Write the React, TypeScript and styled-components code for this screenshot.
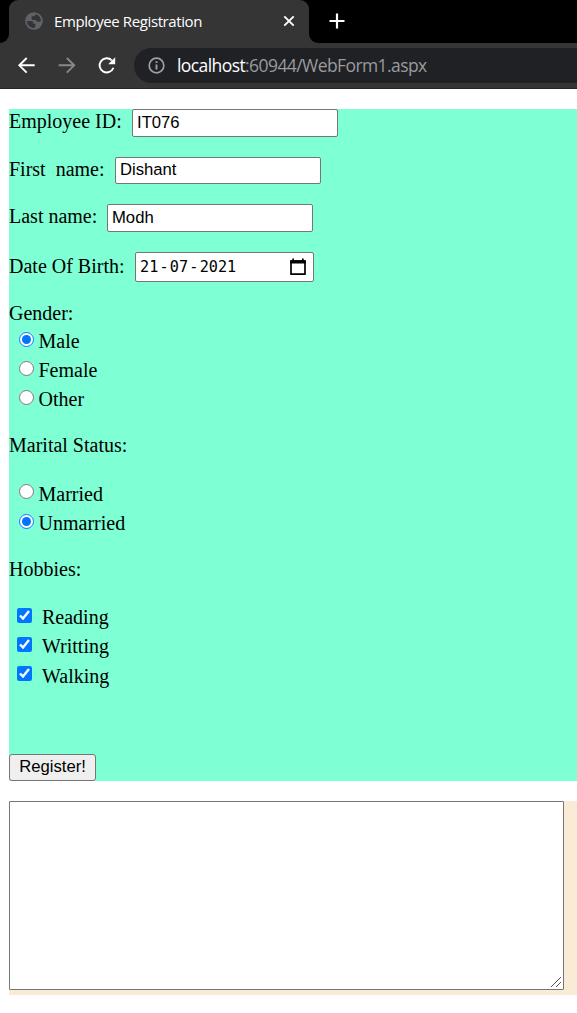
import React from 'react';
import styled, { createGlobalStyle } from 'styled-components';

const GlobalStyle = createGlobalStyle`
  * { box-sizing: border-box; }
  html, body { margin: 0; background: #fff; overflow: hidden; }
`;

const Page = styled.div`
  width: 577px;
  height: 1013px;
  overflow: hidden;
  background: #fff;
  color: #000;
  font: 20px/22px 'Liberation Serif', 'Times New Roman', serif;
`;

const Browser = styled.header`
  height: 89px;
  background: #353535;
  border-bottom: 1px solid #242527;
  font-family: 'Open Sans', 'Segoe UI', sans-serif;
`;

const TabStrip = styled.div`
  height: 43px;
  display: flex;
  background: #353535;
`;

const StripStart = styled.div`
  width: 9px;
  background: #000;
  border-bottom-right-radius: 9px;
`;

const TabBack = styled.div`
  width: 300px;
  background: #000;
`;

const Tab = styled.div`
  height: 43px;
  padding: 0 13px 1px 16px;
  display: flex;
  align-items: center;
  background: #353535;
  border-radius: 9px 9px 0 0;
`;

const TabTitle = styled.span`
  flex: 1;
  margin-left: 11px;
  color: #fff;
  font-size: 15px;
  line-height: 20px;
  letter-spacing: -0.4px;
  white-space: nowrap;
`;

const StripRest = styled.div`
  flex: 1;
  padding: 13px 0 0 19.5px;
  background: #000;
  border-bottom-left-radius: 9px;
`;

const Toolbar = styled.div`
  height: 45px;
  padding-left: 17px;
  display: flex;
  align-items: center;
`;

const NavIcon = styled.svg`
  flex: none;
  display: block;
  margin-right: 20px;
`;

const AddressBar = styled.div`
  flex: 1;
  height: 35px;
  margin: 0 0 1px -3px;
  padding-left: 14px;
  display: flex;
  align-items: center;
  background: #202124;
  border-radius: 18px 0 0 18px;
`;

const Url = styled.span`
  margin-left: 12px;
  color: #999b9e;
  font-size: 17.5px;
  line-height: 24px;
  letter-spacing: -0.58px;
  white-space: nowrap;
`;

const Host = styled.span`
  color: #fff;
`;

const Form = styled.form`
  height: 672px;
  margin: 20px 0 0 9px;
  background: #7fffd4;
`;

const Row = styled.div<{ $height: number }>`
  height: ${p => p.$height}px;
  display: flex;
  align-items: flex-start;
  white-space: pre;
`;

const Label = styled.label<{ $width: number; $drop?: number }>`
  flex: none;
  width: ${p => p.$width}px;
  margin-top: ${p => p.$drop ?? 1}px;
`;

const TextInput = styled.input<{ $short?: boolean }>`
  width: 206px;
  height: ${p => (p.$short ? 27 : 28)}px;
  padding: 0 4px ${p => (p.$short ? 1 : 0)}px;
  border: 1px solid #767676;
  border-radius: 2px;
  background: #fff;
  color: #000;
  font: 16.67px 'Liberation Sans', Arial, sans-serif;
  outline: none;
`;

const DateField = styled.div`
  width: 179px;
  height: 30px;
  padding: 0 6px 0 4px;
  display: flex;
  align-items: center;
  justify-content: space-between;
  border: 1px solid #767676;
  border-radius: 2px;
  background: #fff;
  font: 15.2px/20px 'DejaVu Sans Mono', Consolas, monospace;
`;

const Dash = styled.span`
  margin: 0 1.2px;
`;

const Choice = styled.input<{ $left: number; $gap: number; $top: number }>`
  flex: none;
  width: 15px;
  height: 15px;
  margin: ${p => p.$top}px ${p => p.$gap}px 0 ${p => p.$left}px;
`;

const RegisterButton = styled.button`
  display: block;
  width: 87px;
  height: 27px;
  padding: 0 0 2px;
  border: 1px solid #767676;
  border-radius: 3px;
  background: #efefef;
  color: #000;
  font: 16.67px 'Liberation Sans', Arial, sans-serif;
`;

const Output = styled.section`
  position: relative;
  height: 194px;
  margin: 20px 0 0 9px;
  background: #faebd7;
`;

const OutputBox = styled.textarea`
  display: block;
  width: 555px;
  height: 189px;
  border: 1px solid #767676;
  border-radius: 1px;
  background: #fff;
  outline: none;
  resize: none;
`;

const ResizeGrip = styled.svg`
  position: absolute;
  left: 541px;
  top: 175px;
  pointer-events: none;
`;

type OptionProps = {
  type: 'radio' | 'checkbox';
  name: string;
  text: string;
  height: number;
  top?: number;
  checked?: boolean;
};

function Option({ type, name, text, height, top = 2, checked }: OptionProps) {
  const radio = type === 'radio';
  return (
    <Row as="label" $height={height}>
      <Choice type={type} name={name} defaultChecked={checked} $top={top} $left={radio ? 10 : 8} $gap={radio ? 4.5 : 10} />
      {text}
    </Row>
  );
}

export default function App() {
  return (
    <>
      <GlobalStyle />
      <Page>
        <Browser>
          <TabStrip>
            <StripStart />
            <TabBack>
              <Tab>
                <svg width="18" height="18" viewBox="0 0 18 18">
                  <circle cx="9" cy="9" r="8.8" fill="#5f6368" />
                  <path d="M2 9.1h4.2c1.5 0 2.2.8 2.2 2v.6h2v2.2c-.1 1.2-.8 2-2 2.1C4.7 15.7 2 12.9 2 9.1ZM11 2.3c2.6.8 4.7 3 5 6-.6 1.2-1.700 1.700-3 1.500-1.200-.1-1.800-.8-1.900-1.800H8.300c-1.300-.1-1.900-.8-1.900-2s.8-1.900 2-1.900h1.200c.2-.9.6-1.500 1.400-1.800Z" fill="#353535" />
                </svg>
                <TabTitle>Employee Registration</TabTitle>
                <svg width="14" height="14" viewBox="0 0 14 14" fill="none" stroke="#fff" strokeWidth="1.9">
                  <path d="M2.3 2.3 11.7 11.7M11.7 2.3 2.3 11.7" />
                </svg>
              </Tab>
            </TabBack>
            <StripRest>
              <svg width="16" height="16" viewBox="0 0 16 16" stroke="#fff" strokeWidth="2.2" display="block">
                <path d="M.5 8h15M8 .5v15" />
              </svg>
            </StripRest>
          </TabStrip>
          <Toolbar>
            <NavIcon width="20" height="20" viewBox="0 0 20 20" fill="none" stroke="#fff" strokeWidth="1.9">
              <path d="M17.7 9.3H2.5M9.7 2 2.3 9.3 9.7 16.7" />
            </NavIcon>
            <NavIcon width="20" height="20" viewBox="0 0 20 20" fill="none" stroke="#87888a" strokeWidth="1.9">
              <path d="M1.7 9.3h15.5M9.8 2 17.2 9.3 9.8 16.7" />
            </NavIcon>
            <NavIcon width="20" height="20" viewBox="0 0 20 20" fill="none" stroke="#fff" strokeWidth="1.9">
              <path d="M16.4 11.7A7.1 7.1 0 1 1 14.8 4.4" />
              <path d="M18.2 1.3v7h-7Z" fill="#fff" stroke="none" />
            </NavIcon>
            <AddressBar>
              <svg width="17" height="17" viewBox="0 0 17 17" fill="none" stroke="#9aa0a6" strokeWidth="1.7">
                <circle cx="8.5" cy="8.5" r="7.3" />
                <path d="M8.5 7.5v5M8.5 4.3v1.8" strokeWidth="1.9" />
              </svg>
              <Url><Host>localhost</Host>:60944/WebForm1.aspx</Url>
            </AddressBar>
          </Toolbar>
        </Browser>

        <Form onSubmit={e => e.preventDefault()}>
          <Row $height={48}>
            <Label $width={123}>Employee ID:</Label>
            <TextInput defaultValue="IT076" />
          </Row>
          <Row $height={47}>
            <Label $width={106}>First  name:</Label>
            <TextInput $short defaultValue="Dishant" />
          </Row>
          <Row $height={48}>
            <Label $width={98}>Last name:</Label>
            <TextInput defaultValue="Modh" />
          </Row>
          <Row $height={50}>
            <Label $width={126} $drop={3}>Date Of Birth:</Label>
            <DateField>
              <span>21<Dash>-</Dash>07<Dash>-</Dash>2021</span>
              <svg width="18" height="18" viewBox="0 0 18 18">
                <path d="M2 3h14v13.2H2Z" fill="none" stroke="#000" strokeWidth="1.7" strokeLinejoin="round" />
                <path d="M1.2 2.2h15.6v3.3H1.2ZM3.3.4h1.7v2.6h-1.7ZM13 .4h1.7v2.6H13Z" />
              </svg>
            </DateField>
          </Row>
          <Row $height={28}>Gender:</Row>
          <Option type="radio" name="gender" text="Male" height={29} checked />
          <Option type="radio" name="gender" text="Female" height={29} />
          <Option type="radio" name="gender" text="Other" height={46} />
          <Row $height={49}>Marital Status:</Row>
          <Option type="radio" name="marital" text="Married" height={29} top={1} />
          <Option type="radio" name="marital" text="Unmarried" height={46} checked />
          <Row $height={48}>Hobbies:</Row>
          <Option type="checkbox" name="reading" text="Reading" height={29} checked />
          <Option type="checkbox" name="writting" text="Writting" height={30} checked />
          <Option type="checkbox" name="walking" text="Walking" height={89} top={1} checked />
          <RegisterButton>Register!</RegisterButton>
        </Form>

        <Output>
          <OutputBox />
          <ResizeGrip width="12" height="12" viewBox="0 0 12 12" stroke="#555" strokeWidth="1">
            <path d="M1 11 11 1M6 11 11 6" />
          </ResizeGrip>
        </Output>
      </Page>
    </>
  );
}
